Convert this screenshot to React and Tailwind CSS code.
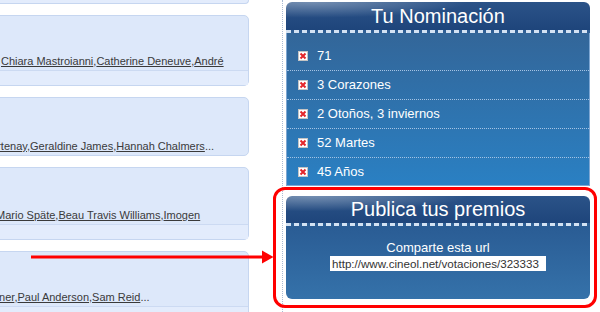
const nominations = ['71', '3 Corazones', '2 Otoños, 3 inviernos', '52 Martes', '45 Años'];

const cards = [
    { names: ['Chiara Mastroianni', 'Catherine Deneuve', 'André'], shift: 'ml-0', upper: 'h-[54px]', lower: true, more: false },
    { names: ['Courtenay', 'Geraldine James', 'Hannah Chalmers'], shift: '-ml-[24px]', upper: 'h-[57px]', lower: false, more: true },
    { names: ['Mario Späte', 'Beau Travis Williams', 'Imogen'], shift: '-ml-[5px]', upper: 'h-[56px]', lower: true, more: false },
    { names: ['Turner', 'Paul Anderson', 'Sam Reid'], shift: '-ml-[18px]', upper: 'h-[54px]', lower: true, more: true },
];

function BrokenIcon() {
    return (
        <svg width="10" height="10" viewBox="0 0 10 10" className="shrink-0">
            <rect x="0.5" y="0.5" width="9" height="9" fill="#ffffff" stroke="#c4c4c4" />
            <path d="M2.5 2.5 L7.5 7.5 M7.5 2.5 L2.5 7.5" stroke="#e3262b" strokeWidth="2" />
        </svg>
    );
}

function Card({ card }) {
    return (
        <div className="flex flex-col rounded-[5px] border border-[#c6d6f0] bg-[#dde8fa]">
            <div className={`${card.upper} flex items-end pb-[2px] pl-[10px] overflow-hidden`}>
                <div className={`${card.shift} whitespace-nowrap text-[11px] leading-[13px] text-[#3a3a3a]`}>
                    {card.names.map((name, i) => (
                        <span key={name}>
                            {i > 0 && ','}
                            <span className="underline underline-offset-[1px]">{name}</span>
                        </span>
                    ))}
                    {card.more && '...'}
                </div>
            </div>
            {card.lower && <div className="h-[15px] border-t border-[#ccdaf2] bg-[#e3ecfc]" />}
        </div>
    );
}

function PanelHeader({ title, height }) {
    return (
        <>
            <div
                className={`${height} rounded-t-[6px] bg-[radial-gradient(ellipse_at_8%_0%,rgba(255,255,255,0.35),transparent_40%),linear-gradient(180deg,#2b5388,#1e457b)] text-center text-[20px] text-white`}
            >
                {title}
            </div>
            <div className="h-[3px] bg-[repeating-linear-gradient(90deg,#d3e2f3_0px,#d3e2f3_5px,#2f5f95_5px,#2f5f95_8px)]" />
        </>
    );
}

export default function App() {
    return (
        <div className="relative flex h-[312px] w-[600px] overflow-hidden bg-white font-['Liberation_Sans',Arial,sans-serif]">
            {/* Left column of cards */}
            <div className="w-[282px] shrink-0 overflow-hidden">
                <div className="-ml-[10px] flex w-[259px] flex-col gap-[11px]">
                    <div className="h-[4px] rounded-b-[5px] border border-t-0 border-[#c6d6f0] bg-[#e3ecfc]" />
                    {cards.map((card, i) => (
                        <Card key={i} card={card} />
                    ))}
                </div>
            </div>

            {/* Dotted divider */}
            <div className="h-full w-0 border-l border-dotted border-[#a9bcd5]" />

            {/* Right column */}
            <div className="flex w-[308px] flex-col pl-[3px] pt-[2px]">
                <div className="w-[304px]">
                    <PanelHeader title="Tu Nominación" height="h-[28px] leading-[28px]" />
                    <div className="border-x border-b border-[#7ea7d3] bg-[linear-gradient(180deg,#336699,#2a80c3)] pt-[9px]">
                        {nominations.map((n, i) => (
                            <div
                                key={n}
                                className={`flex items-center gap-[9px] pl-[11px] text-[13px] text-white ${
                                    i < nominations.length - 1
                                        ? 'h-[29px] border-b border-dotted border-[#a5c3e4]'
                                        : 'h-[27px]'
                                }`}
                            >
                                <BrokenIcon />
                                <span>{n}</span>
                            </div>
                        ))}
                    </div>
                </div>

                <div className="mt-[10px] w-[304px]">
                    <PanelHeader title="Publica tus premios" height="h-[27px] leading-[27px]" />
                    <div className="flex h-[73px] flex-col items-center rounded-b-[6px] bg-[linear-gradient(180deg,#2a5c94,#3572aa)] pt-[14px]">
                        <div className="text-[13px] leading-[15px] text-white">Comparte esta url</div>
                        <div className="mt-[1px] h-[15px] w-[216px] bg-white pl-[2px] text-[11.6px] leading-[15px] whitespace-nowrap text-[#333333]">
                            http://www.cineol.net/votaciones/323333
                        </div>
                    </div>
                </div>
            </div>

            {/* Annotation overlays */}
            <svg className="absolute left-[31px] top-[250px]" width="243" height="14" viewBox="0 0 243 14">
                <line x1="0" y1="7" x2="233" y2="7" stroke="#ff0000" strokeWidth="3" />
                <polygon points="231,0.5 242.5,7 231,13.5" fill="#ff0000" />
            </svg>
            <div className="absolute left-[273px] top-[187px] h-[121px] w-[324px] rounded-[12px] border-[3px] border-[#ff0000]" />
        </div>
    );
}
